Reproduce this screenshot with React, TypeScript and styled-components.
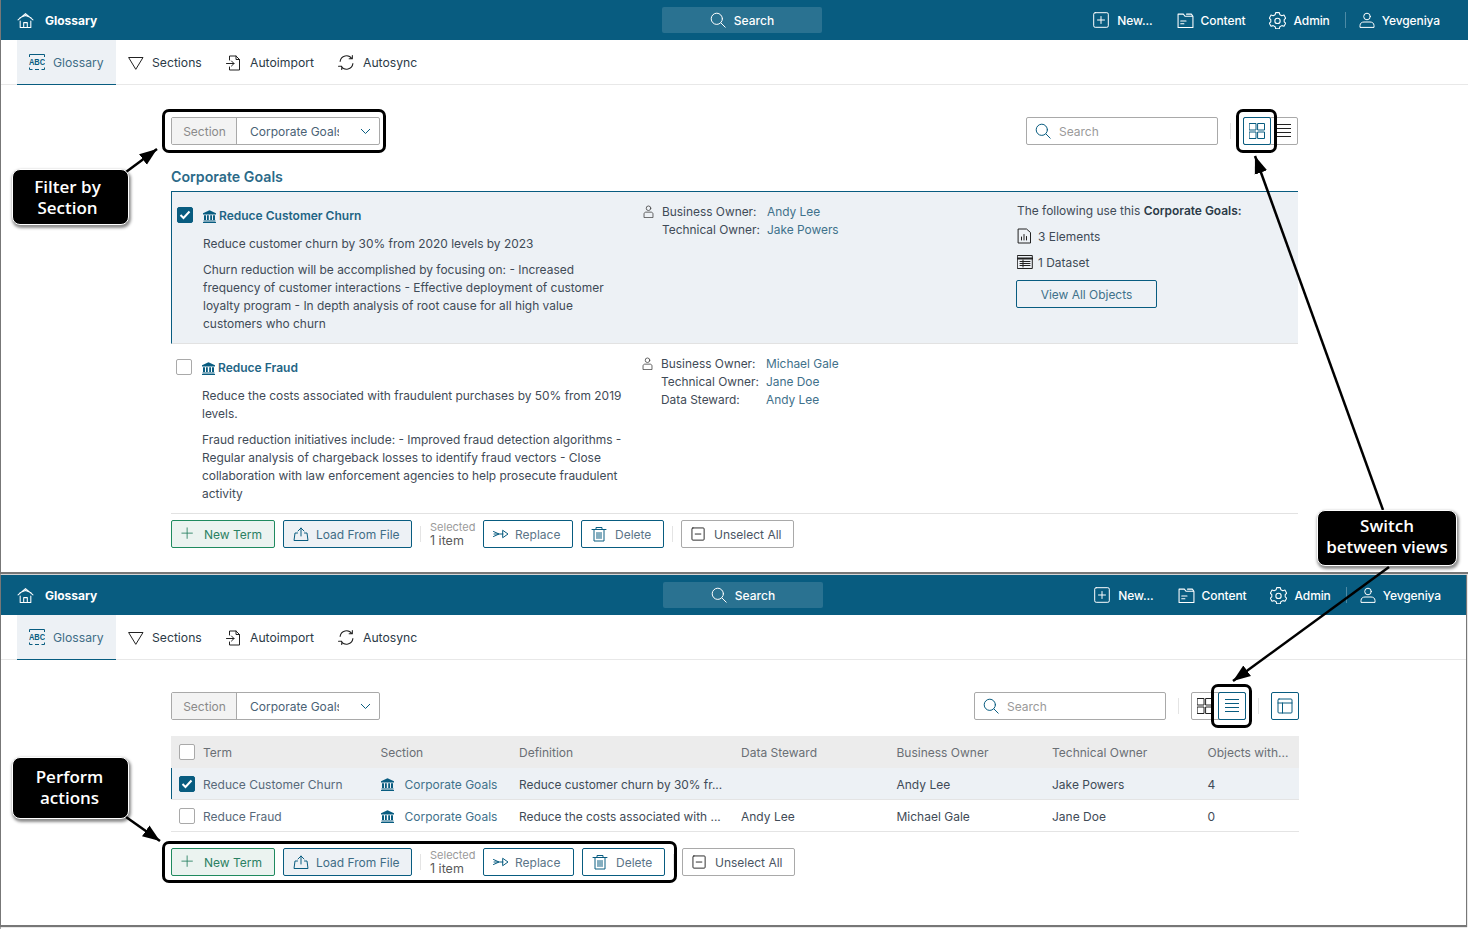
import React from "react";
import styled, { createGlobalStyle } from "styled-components";

const TEAL = "#085c80";
const FONT = `Inter, "Liberation Sans", sans-serif`;

const Global = createGlobalStyle`
  html, body { margin: 0; padding: 0; background: #fff; }
  body { font-family: ${FONT}; font-size: 12.5px; color: #333f4d; }
  * { box-sizing: border-box; }
`;

const Page = styled.div`
  position: relative;
  width: 1468px;
  height: 929px;
  overflow: hidden;
  padding-left: 1px;
  display: flex;
  flex-direction: column;
  gap: 3px;
  background: #fff;
  box-shadow: inset 1px 0 0 #a8a8a8;
`;
const Panel = styled.section<{ $w: number; $h: number }>`
  width: ${(p) => p.$w}px;
  height: ${(p) => p.$h}px;
  flex: none;
  background: #fff;
  box-shadow: 0 1px 1px 1px #777;
`;
const TopBar = styled.header<{ $left: number; $right: number }>`
  height: 40px;
  background: ${TEAL};
  color: #fff;
  display: grid;
  grid-template-columns: ${(p) => p.$left}px 160px 1fr;
  padding-right: ${(p) => p.$right}px;
  align-items: center;
`;
const Brand = styled.div`
  display: flex;
  align-items: center;
  gap: 11px;
  padding-left: 16px;
  font-weight: 700;
  font-size: 12px;
`;
const GlobalSearch = styled.div`
  height: 26px;
  background: #2a7291;
  border-radius: 2px;
  display: flex;
  align-items: center;
  justify-content: center;
  gap: 8px;
  font-weight: 500;
  font-size: 12px;
`;
const NavLinks = styled.nav`
  display: flex;
  justify-content: flex-end;
  align-items: center;
`;
const NavLink = styled.div<{ $ml: number; $gap: number }>`
  display: flex;
  align-items: center;
  gap: ${(p) => p.$gap}px;
  margin-left: ${(p) => p.$ml}px;
  font-weight: 500;
  font-size: 12px;
  letter-spacing: -0.1px;
`;
const NavSep = styled.span`
  width: 1px;
  height: 16px;
  background: #4d8aa5;
  margin-left: 15px;
`;
const Tabs = styled.nav`
  height: 45px;
  border-bottom: 1px solid #e8e8e8;
  padding-left: 16px;
  display: flex;
`;
const Tab = styled.div<{ $active?: boolean; $w: number }>`
  width: ${(p) => p.$w}px;
  height: 45px;
  display: flex;
  align-items: center;
  gap: 8px;
  padding-left: 12px;
  font-size: 12.2px;
  color: ${(p) => (p.$active ? "#3f6d86" : "#2b3a47")};
  background: ${(p) => (p.$active ? "#edf1f5" : "transparent")};
  border-bottom: ${(p) => (p.$active ? `1px solid ${TEAL}` : "none")};
`;
const Content = styled.div<{ $w: number }>`
  padding: 32px 0 0 170px;
  width: ${(p) => p.$w}px;
  box-sizing: content-box;
`;
const Toolbar = styled.div`
  height: 28px;
  display: flex;
  align-items: center;
`;
const SelectBox = styled.div`
  height: 100%;
  width: 209px;
  border: 1px solid #a9a9a9;
  border-radius: 2px;
  display: flex;
  align-items: center;
  font-size: 12px;
`;
const SelectLabel = styled.span`
  width: 65px;
  height: 100%;
  padding-left: 1px;
  background: #f3f3f3;
  border-right: 1px solid #a9a9a9;
  color: #8a8a8a;
  display: flex;
  align-items: center;
  justify-content: center;
`;
const SelectValue = styled.span`
  width: 89px;
  margin-left: 13px;
  overflow: hidden;
  white-space: nowrap;
  color: #4a6275;
`;
const Chevron = styled.svg`
  margin-left: 21px;
`;
const SearchBox = styled.div`
  margin-left: auto;
  width: 192px;
  height: 100%;
  border: 1px solid #a9a9a9;
  border-radius: 2px;
  display: flex;
  align-items: center;
  gap: 8px;
  padding-left: 8px;
  color: #9a9a9a;
  font-size: 12px;
`;
const VSep = styled.span`
  width: 1px;
  height: 16px;
  flex: none;
  background: #e4e4e4;
  margin: 0 12px;
`;
const ActionSep = styled(VSep)`
  margin: 0 8px;
`;
const Toggle = styled.div`
  width: 55px;
  height: 100%;
  border: 1px solid #a9a9a9;
  border-radius: 2px;
  display: flex;
  justify-content: space-between;
`;
const ToggleBtn = styled.div<{ $active?: boolean }>`
  width: ${(p) => (p.$active ? "28px" : "26px")};
  margin: ${(p) => (p.$active ? "-1px" : "0")};
  height: ${(p) => (p.$active ? "calc(100% + 2px)" : "100%")};
  border: ${(p) => (p.$active ? `1px solid ${TEAL}` : "none")};
  border-radius: 2px;
  display: flex;
  align-items: center;
  justify-content: center;
`;
const IconBtn = styled.div`
  width: 28px;
  height: 100%;
  border: 1px solid ${TEAL};
  border-radius: 2px;
  display: flex;
  align-items: center;
  justify-content: center;
`;
const Heading = styled.h2`
  margin: 23px 0 5px;
  font-size: 14.2px;
  line-height: 18px;
  font-weight: 600;
  color: #2b6a88;
`;
const List = styled.div`
  border-top: 1px solid ${TEAL};
`;
const Term = styled.article<{ $selected?: boolean }>`
  display: grid;
  padding-left: 5px;
  grid-template-columns: 26px 439px 375px 1fr;
  background: ${(p) => (p.$selected ? "#edf1f5" : "#fff")};
  border-bottom: 1px solid #e2e2e2;
  border-left: ${(p) => (p.$selected ? `1px solid ${TEAL}` : "none")};
`;
const CheckCell = styled.div`
  padding-top: 15px;
`;
const Check = styled.span<{ $on?: boolean }>`
  width: 16px;
  height: 16px;
  border-radius: 2px;
  background: ${(p) => (p.$on ? TEAL : "#fff")};
  border: 1px solid ${(p) => (p.$on ? TEAL : "#a9a9a9")};
  display: flex;
  align-items: center;
  justify-content: center;
`;
const TermBody = styled.div`
  padding: 15px 14px 10px 0;
`;
const TermTitle = styled.div`
  display: flex;
  align-items: center;
  gap: 3px;
  line-height: 18px;
  font-size: 12px;
  font-weight: 600;
  color: #1f6585;
`;
const Para = styled.p<{ $mt: number }>`
  margin: ${(p) => p.$mt}px 0 0;
  line-height: 18px;
  font-size: 11.95px;
  color: #3f4b57;
`;
const Owners = styled.div`
  padding-top: 10px;
  display: flex;
  gap: 7px;
`;
const OwnerIconBox = styled.div`
  padding-top: 3px;
  height: 16px;
`;
const OwnerGrid = styled.div`
  display: grid;
  grid-template-columns: 105px auto;
  grid-auto-rows: 18px;
  align-items: center;
  font-size: 11.9px;
  color: #3f4b57;
`;
const OwnerValue = styled.span`
  color: #3f718b;
`;
const UsedBy = styled.div`
  padding-top: 10px;
  font-size: 11.95px;
  color: #3f4b57;
`;
const UsedTitle = styled.div`
  line-height: 18px;
  b { font-weight: 600; color: #2b3a47; }
`;
const UsedRow = styled.div<{ $mt: number }>`
  margin-top: ${(p) => p.$mt}px;
  height: 18px;
  display: flex;
  align-items: center;
  gap: 5px;
`;
const ViewAll = styled.button`
  margin: 9px 0 0 -1px;
  width: 141px;
  height: 28px;
  font: inherit;
  color: #3f718b;
  background: transparent;
  border: 1px solid ${TEAL};
  border-radius: 2px;
`;
const Actions = styled.div<{ $mt: number }>`
  margin-top: ${(p) => p.$mt}px;
  height: 28px;
  display: flex;
  align-items: center;
`;
const Btn = styled.button<{ $kind?: "green" | "blue" | "line" | "plain"; $w: number; $ml?: number; $gap: number }>`
  width: ${(p) => p.$w}px;
  margin-left: ${(p) => p.$ml ?? 0}px;
  height: 28px;
  flex: none;
  padding: 0 0 0 9px;
  display: flex;
  align-items: center;
  gap: ${(p) => p.$gap}px;
  font-family: ${FONT};
  font-size: 12px;
  border-radius: 2px;
  border: 1px solid
    ${(p) => (p.$kind === "green" ? "#1f8a5f" : p.$kind === "plain" ? "#a9a9a9" : TEAL)};
  color: ${(p) =>
    p.$kind === "green" ? "#2a8062" : p.$kind === "blue" ? "#3f6d86" : p.$kind === "plain" ? "#4a5563" : "#5b7588"};
  background: ${(p) => (p.$kind === "green" ? "#ebf3f0" : p.$kind === "blue" ? "#edf1f5" : "#fff")};
`;
const SelectedInfo = styled.div`
  width: 53px;
  margin-left: 1px;
  line-height: 13px;
  font-size: 12.5px;
  color: #5a5a5a;
`;
const SelectedLabel = styled.div`
  font-size: 11px;
  color: #9a9a9a;
`;
const TableSpacer = styled.div`
  height: 16px;
`;
const TableRow = styled.div<{ $kind: "head" | "selected" | "plain" }>`
  height: 32px;
  display: grid;
  grid-template-columns: 32px 177.5px 138.5px 222px 155.5px 155.5px 155.5px 1fr;
  align-items: center;
  font-size: 12px;
  color: ${(p) => (p.$kind === "head" ? "#6a6f75" : "#3f4b57")};
  background: ${(p) => (p.$kind === "head" ? "#ececec" : p.$kind === "selected" ? "#edf1f5" : "#fff")};
  border-bottom: ${(p) => (p.$kind === "head" ? "none" : "1px solid #e4e4e4")};
  box-shadow: ${(p) => (p.$kind === "selected" ? `inset 1px 0 0 ${TEAL}` : "none")};
  & > span { padding-top: ${(p) => (p.$kind === "head" ? 0 : 1)}px; }
`;
const TableCheck = styled.div`
  padding-left: 8px;
`;
const TermCell = styled.span`
  color: #58697a;
`;
const DefinitionCell = styled.span`
  font-size: 11.9px;
`;
const SectionCell = styled.span`
  display: flex;
  align-items: center;
  gap: 11px;
  color: #3f718b;
`;
const Callout = styled.div<{ $x: number; $y: number; $w: number; $h: number; $pr: number; $pb: number }>`
  position: absolute;
  left: ${(p) => p.$x}px;
  top: ${(p) => p.$y}px;
  width: ${(p) => p.$w}px;
  height: ${(p) => p.$h}px;
  padding: 0 ${(p) => p.$pr}px ${(p) => p.$pb}px 0;
  background: #000;
  color: #fff;
  border: 1px solid #fff;
  border-radius: 8px;
  box-shadow: 1px 2px 3px 1px rgba(0, 0, 0, 0.45);
  font-family: "Open Sans", sans-serif;
  font-weight: 600;
  font-size: 17px;
  line-height: 21px;
  display: flex;
  align-items: center;
  justify-content: center;
  text-align: center;
`;
const Ring = styled.div<{ $x: number; $y: number; $w: number; $h: number }>`
  position: absolute;
  left: ${(p) => p.$x}px;
  top: ${(p) => p.$y}px;
  width: ${(p) => p.$w}px;
  height: ${(p) => p.$h}px;
  border: 3px solid #000;
  border-radius: 7px;
  pointer-events: none;
`;
const ArrowLayer = styled.svg`
  position: absolute;
  left: 0;
  top: 0;
  pointer-events: none;
`;

type IP = { c?: string; s?: number };
const Svg = ({ s = 16, c = "currentColor", children, w = 1 }: { s?: number; c?: string; w?: number; children: React.ReactNode }) => (
  <svg width={s} height={s} viewBox="0 0 16 16" fill="none" stroke={c} strokeWidth={w} strokeLinecap="round" strokeLinejoin="round" style={{ flex: "none" }}>
    {children}
  </svg>
);
const HomeI = () => (
  <Svg s={17} c="#fff"><path d="M1 7.5 8 1.5l7 6M3 8.5V14.5h10V8.5M2.8 5.3 8 3.2l5.2 2.1M6.3 14.5V10h3.4v4.5" /></Svg>
);
const SearchI = ({ c = "#fff", s = 16 }: IP) => (
  <Svg s={s} c={c}><circle cx="6.8" cy="6.8" r="5.6" /><path d="m11 11 4.2 4.2" /></Svg>
);
const PlusBox = () => (
  <Svg s={16} c="#fff"><rect x=".7" y=".7" width="14.6" height="14.6" rx="1.5" /><path d="M8 4.5v7M4.5 8h7" /></Svg>
);
const FolderI = () => (
  <Svg s={17} c="#fff"><path d="M1 14.5V2h5l1.5 2H15v10.5ZM9 2h4.5L15 4M3.5 8.5h5M3.5 11h3" /></Svg>
);
const GearI = () => (
  <Svg s={17} c="#fff"><path d="M6.3 1.2h3.4l.5 2 1.9 1 2-.6 1.6 3-1.4 1.4v2l1.4 1.4-1.6 2.8-2-.5-1.9 1-.5 2H6.3l-.5-2-1.9-1-2 .5-1.6-2.8L1.7 10V8L.3 6.6l1.6-3 2 .6 1.9-1Z" transform="translate(0 -.6) scale(1 .98)" /><circle cx="8" cy="8.4" r="2.5" /></Svg>
);
const UserI = () => (
  <Svg s={16} c="#fff"><circle cx="8" cy="4.5" r="3.3" /><path d="M1 15v-1.5C1 11 3 10 5 10h6c2 0 4 1 4 3.5V15Z" /></Svg>
);
const AbcI = () => (
  <svg width="16" height="16" viewBox="0 0 16 16" style={{ flex: "none" }} fill="none" stroke={TEAL} strokeWidth="1">
    <path d="M.5 3V.5h15V3M.5 13.5v2h3M12.5 15.5h3v-2M6 15.5h4" />
    <text x="8" y="9.2" transform="scale(1 1.25)" textAnchor="middle" fontSize="7.5" fontWeight="700" fill={TEAL} stroke="none" fontFamily="Liberation Sans">ABC</text>
  </svg>
);
const TriI = () => (
  <Svg s={16} c="#222"><path d="M1 2.5h14L8 14Z" /></Svg>
);
const ImportI = () => (
  <Svg s={16} c="#222"><path d="M3.5 5V1h6.5l3.5 3.5V15h-10v-3M10 1v3.5h3.5M.5 8.5H8M5.5 6 8 8.5 5.5 11" /></Svg>
);
const SyncI = () => (
  <Svg s={17} c="#222"><path d="M2 7a6 6 0 0 1 11-2.5M14 9a6 6 0 0 1-11 2.5M13.5 1.5v3h-3M.5 11.5h3v3" /></Svg>
);
const BankI = () => (
  <svg width="13" height="13" viewBox="0 0 13 13" fill={TEAL} style={{ flex: "none" }}>
    <path d="M6.5.3 13 3.3v1.2H0V3.3ZM1 5.2h2v4.9H1ZM4 5.2h1.8v4.9H4ZM7.2 5.2H9v4.9H7.2ZM10 5.2h2v4.9h-2ZM.5 10.6h12v1H.5ZM0 12h13v1H0Z" />
  </svg>
);
const Tick = () => (
  <svg width="12" height="10" viewBox="0 0 12 10" fill="none" stroke="#fff" strokeWidth="2"><path d="m1.5 5 3 3 6-6.5" /></svg>
);
const OwnerI = () => (
  <Svg s={13} c="#444"><circle cx="8" cy="4" r="2.8" /><path d="M2.5 15v-4c0-1.2 1-2.2 2.2-2.2h6.6c1.2 0 2.2 1 2.2 2.2v4Z" /></Svg>
);
const DocI = () => (
  <Svg s={16} c="#222"><path d="M1.5 1h8l4 3.5V15h-12ZM4.5 12V9M7 12V6.5M9.5 12V8.5" /></Svg>
);
const DataI = () => (
  <Svg s={16} c="#222"><rect x=".7" y="1.5" width="14.6" height="13" /><path d="M.7 4.5h14.6" strokeWidth="2" /><path d="M3 7.5h10M3 9.5h10M3 11.5h10M6 6v7" /></Svg>
);
const GridI = ({ c = "#222" }: IP) => (
  <Svg s={16} c={c}><rect x=".5" y=".5" width="6.5" height="6.5" /><rect x="9" y=".5" width="6.5" height="6.5" /><rect x=".5" y="9" width="6.5" height="6.5" /><rect x="9" y="9" width="6.5" height="6.5" /></Svg>
);
const LinesI = ({ c = "#222" }: IP) => (
  <svg width="14" height="14" viewBox="0 0 14 14" fill="none" stroke={c} style={{ flex: "none" }}><path d="M0 .5h14M0 4.5h14M0 8.5h14M0 12.5h14" /></svg>
);
const TableI = () => (
  <Svg s={16} c={TEAL}><rect x="1" y="1" width="14" height="14" rx="1" /><path d="M1 5h14M5.5 5v10" /></Svg>
);
const PlusI = () => (
  <Svg s={14} c="#2a8062"><path d="M7 1v12M1 7h12" /></Svg>
);
const UploadI = () => (
  <Svg s={16} c={TEAL}><path d="M8 10V2M5 5l3-3 3 3M4.5 7H2l-1 7.5h14L14 7h-2.5" /></Svg>
);
const ReplaceI = () => (
  <Svg s={16} c={TEAL}><path d="M.5 5.5 6 8 .5 10.5M1 8h9M10 4.5 15 8l-5 3.5Z" /></Svg>
);
const TrashI = () => (
  <Svg s={16} c={TEAL}><path d="M1 3.5h14M5 3.5V1.5h6v2M3 3.5V15h10V3.5M6 6.5v6M8 6.5v6M10 6.5v6" /></Svg>
);
const MinusBox = () => (
  <Svg s={15} c="#222"><rect x="1" y="1" width="13" height="13" rx="1" /><path d="M4.5 7.5h6" /></Svg>
);

const Header = ({ left, right }: { left: number; right: number }) => (
  <>
    <TopBar $left={left} $right={right}>
      <Brand><HomeI />Glossary</Brand>
      <GlobalSearch><SearchI />Search</GlobalSearch>
      <NavLinks>
        <NavLink $ml={0} $gap={8}><PlusBox />New...</NavLink>
        <NavLink $ml={24} $gap={7}><FolderI />Content</NavLink>
        <NavLink $ml={23} $gap={8}><GearI />Admin</NavLink>
        <NavSep />
        <NavLink $ml={13} $gap={7}><UserI />Yevgeniya</NavLink>
      </NavLinks>
    </TopBar>
    <Tabs>
      <Tab $active $w={99}><AbcI />Glossary</Tab>
      <Tab $w={98}><TriI />Sections</Tab>
      <Tab $w={112}><ImportI />Autoimport</Tab>
      <Tab $w={120}><SyncI />Autosync</Tab>
    </Tabs>
  </>
);

const Filter = () => (
  <SelectBox>
    <SelectLabel>Section</SelectLabel>
    <SelectValue>Corporate Goals</SelectValue>
    <Chevron width="11" height="7" viewBox="0 0 11 7" fill="none" stroke={TEAL}><path d="m1 1 4.5 4.5L10 1" /></Chevron>
  </SelectBox>
);

const ActionBar = ({ mt, replace }: { mt: number; replace: number }) => (
  <Actions $mt={mt}>
    <Btn $kind="green" $w={104} $gap={9}><PlusI />New Term</Btn>
    <Btn $kind="blue" $w={129} $ml={8} $gap={7}><UploadI />Load From File</Btn>
    <ActionSep />
    <SelectedInfo><SelectedLabel>Selected</SelectedLabel>1 item</SelectedInfo>
    <Btn $kind="line" $w={replace} $gap={6}><ReplaceI />Replace</Btn>
    <Btn $kind="line" $w={83} $ml={8} $gap={8}><TrashI />Delete</Btn>
    <ActionSep />
    <Btn $kind="plain" $w={113} $gap={8}><MinusBox />Unselect All</Btn>
  </Actions>
);

const rows = [
  ["Reduce Customer Churn", "Reduce customer churn by 30% fr...", "", "Andy Lee", "Jake Powers", "4"],
  ["Reduce Fraud", "Reduce the costs associated with ...", "Andy Lee", "Michael Gale", "Jane Doe", "0"],
];

export default function App() {
  return (
    <Page>
      <Global />
      <Panel $w={1467} $h={572}>
        <Header left={661} right={28} />
        <Content $w={1127}>
          <Toolbar>
            <Filter />
            <SearchBox><SearchI c={TEAL} />Search</SearchBox>
            <VSep />
            <Toggle>
              <ToggleBtn $active><GridI c={TEAL} /></ToggleBtn>
              <ToggleBtn><LinesI /></ToggleBtn>
            </Toggle>
          </Toolbar>
          <Heading>Corporate Goals</Heading>
          <List>
            <Term $selected>
              <CheckCell><Check $on><Tick /></Check></CheckCell>
              <TermBody>
                <TermTitle><BankI />Reduce Customer Churn</TermTitle>
                <Para $mt={10}>Reduce customer churn by 30% from 2020 levels by 2023</Para>
                <Para $mt={8}>Churn reduction will be accomplished by focusing on: - Increased frequency of customer interactions - Effective deployment of customer loyalty program - In depth analysis of root cause for all high value customers who churn</Para>
              </TermBody>
              <Owners>
                <OwnerIconBox><OwnerI /></OwnerIconBox>
                <OwnerGrid>
                  <span>Business Owner:</span><OwnerValue>Andy Lee</OwnerValue>
                  <span>Technical Owner:</span><OwnerValue>Jake Powers</OwnerValue>
                </OwnerGrid>
              </Owners>
              <UsedBy>
                <UsedTitle>The following use this <b>Corporate Goals:</b></UsedTitle>
                <UsedRow $mt={7}><DocI />3 Elements</UsedRow>
                <UsedRow $mt={8}><DataI />1 Dataset</UsedRow>
                <ViewAll>View All Objects</ViewAll>
              </UsedBy>
            </Term>
            <Term>
              <CheckCell><Check /></CheckCell>
              <TermBody>
                <TermTitle><BankI />Reduce Fraud</TermTitle>
                <Para $mt={10}>Reduce the costs associated with fraudulent purchases by 50% from 2019 levels.</Para>
                <Para $mt={8}>Fraud reduction initiatives include: - Improved fraud detection algorithms - Regular analysis of chargeback losses to identify fraud vectors - Close collaboration with law enforcement agencies to help prosecute fraudulent activity</Para>
              </TermBody>
              <Owners>
                <OwnerIconBox><OwnerI /></OwnerIconBox>
                <OwnerGrid>
                  <span>Business Owner:</span><OwnerValue>Michael Gale</OwnerValue>
                  <span>Technical Owner:</span><OwnerValue>Jane Doe</OwnerValue>
                  <span>Data Steward:</span><OwnerValue>Andy Lee</OwnerValue>
                </OwnerGrid>
              </Owners>
              <div />
            </Term>
          </List>
          <ActionBar mt={6} replace={90} />
        </Content>
      </Panel>

      <Panel $w={1465} $h={350}>
        <Header left={662} right={25} />
        <Content $w={1128}>
          <Toolbar>
            <Filter />
            <SearchBox><SearchI c={TEAL} />Search</SearchBox>
            <VSep />
            <Toggle>
              <ToggleBtn><GridI /></ToggleBtn>
              <ToggleBtn $active><LinesI c={TEAL} /></ToggleBtn>
            </Toggle>
            <VSep />
            <IconBtn><TableI /></IconBtn>
          </Toolbar>
          <TableSpacer />
          <TableRow $kind="head">
            <TableCheck><Check /></TableCheck>
            <span>Term</span><span>Section</span><span>Definition</span><span>Data Steward</span><span>Business Owner</span><span>Technical Owner</span><span>Objects with...</span>
          </TableRow>
          {rows.map((r, i) => (
            <TableRow key={r[0]} $kind={i === 0 ? "selected" : "plain"}>
              <TableCheck><Check $on={i === 0}>{i === 0 && <Tick />}</Check></TableCheck>
              <TermCell>{r[0]}</TermCell>
              <SectionCell><BankI />Corporate Goals</SectionCell>
              <DefinitionCell>{r[1]}</DefinitionCell><span>{r[2]}</span><span>{r[3]}</span><span>{r[4]}</span><span>{r[5]}</span>
            </TableRow>
          ))}
          <ActionBar mt={16} replace={91} />
        </Content>
      </Panel>

      <Ring $x={162} $y={109} $w={224} $h={44} />
      <Ring $x={1236} $y={109} $w={41} $h={44} />
      <Ring $x={1211} $y={684} $w={41} $h={44} />
      <Ring $x={162} $y={841} $w={515} $h={42} />

      <ArrowLayer width="1468" height="929">
        <defs>
          <marker id="head" markerWidth="7" markerHeight="6" refX="7" refY="3" orient="auto" markerUnits="strokeWidth">
            <path d="M0 .4 7 3 0 5.6Z" fill="#000" />
          </marker>
        </defs>
        <g stroke="#000" strokeWidth="2.5">
          <line x1="126" y1="172" x2="157" y2="149" markerEnd="url(#head)" />
          <line x1="1383" y1="510" x2="1255" y2="156" markerEnd="url(#head)" />
          <line x1="1389" y1="567" x2="1233" y2="681" markerEnd="url(#head)" />
          <line x1="126" y1="817" x2="160" y2="841" markerEnd="url(#head)" />
        </g>
      </ArrowLayer>

      <Callout $x={12} $y={169} $w={117} $h={56} $pr={6} $pb={0}>Filter by<br />Section</Callout>
      <Callout $x={12} $y={757} $w={117} $h={62} $pr={2} $pb={3}>Perform<br />actions</Callout>
      <Callout $x={1317} $y={510} $w={140} $h={56} $pr={0} $pb={4}>Switch<br />between views</Callout>
    </Page>
  );
}
